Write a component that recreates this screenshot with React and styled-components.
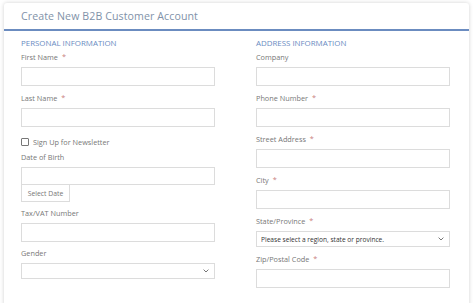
import React from "react";
import styled, { createGlobalStyle } from "styled-components";

const GlobalStyle = createGlobalStyle`
  html, body {
    margin: 0;
    padding: 0;
    background: #ffffff;
  }
  body {
    font-family: "Open Sans", "Liberation Sans", sans-serif;
  }
`;

const Chevron = () => (
  <svg width="6" height="4" viewBox="0 0 6 4">
    <path d="M0.6 0.6 L3 3 L5.4 0.6" fill="none" stroke="#666" strokeWidth="0.9" />
  </svg>
);

const Field = ({ label, required, select, placeholder, mb = 7 }) => (
  <FieldWrap $mb={mb}>
    <Label>
      {label}
      {required && <Star>*</Star>}
    </Label>
    {select ? (
      <SelectBox>
        <SelectText>{placeholder}</SelectText>
        <Chevron />
      </SelectBox>
    ) : (
      <Input />
    )}
  </FieldWrap>
);

export default function App() {
  return (
    <>
      <GlobalStyle />
      <Card>
        <Header>
          <Title>Create New B2B Customer Account</Title>
        </Header>
        <Body>
          <Column>
            <Heading>PERSONAL INFORMATION</Heading>
            <Field label="First Name" required />
            <Field label="Last Name" required mb={10} />
            <CheckRow>
              <Box />
              <CheckText>Sign Up for Newsletter</CheckText>
            </CheckRow>
            <FieldWrap $mb={6}>
              <Label>Date of Birth</Label>
              <Input $h={18} />
              <DateButton>Select Date</DateButton>
            </FieldWrap>
            <Field label="Tax/VAT Number" mb={6} />
            <Field label="Gender" select mb={0} />
          </Column>
          <Column>
            <Heading>ADDRESS INFORMATION</Heading>
            <Field label="Company" />
            <Field label="Phone Number" required />
            <Field label="Street Address" required />
            <Field label="City" required />
            <Field
              label="State/Province"
              required
              select
              placeholder="Please select a region, state or province."
            />
            <Field label="Zip/Postal Code" required mb={0} />
          </Column>
        </Body>
      </Card>
    </>
  );
}

const Card = styled.div`
  width: 465px;
  margin: 3px 0 0 4px;
  background: #fff;
  border-radius: 3px;
  box-shadow: 0 0 4px rgba(0, 0, 0, 0.18);
  padding-bottom: 20px;
`;

const Header = styled.div`
  height: 26px;
  border-bottom: 2px solid #6b8cc0;
  display: flex;
  align-items: center;
  padding-left: 17px;
`;

const Title = styled.h1`
  margin: 0;
  font-size: 10.6px;
  font-weight: 400;
  color: #8192a9;
  letter-spacing: 0.1px;
`;

const Body = styled.div`
  display: grid;
  grid-template-columns: 194px 194px;
  column-gap: 41px;
  padding: 7px 0 0 17px;
`;

const Column = styled.div`
  display: flex;
  flex-direction: column;
`;

const Heading = styled.h2`
  margin: 0 0 4px;
  font-size: 7.9px;
  line-height: 10px;
  font-weight: 400;
  color: #6a8cc2;
`;

const FieldWrap = styled.div`
  display: flex;
  flex-direction: column;
  margin-bottom: ${(p) => p.$mb}px;
`;

const Label = styled.label`
  font-size: 7.3px;
  line-height: 10px;
  color: #777;
  margin-bottom: 5px;
`;

const Star = styled.span`
  margin-left: 4px;
  color: #c98080;
`;

const Input = styled.div`
  height: ${(p) => p.$h || 19}px;
  box-sizing: border-box;
  border: 1px solid #dcdcdc;
  background: #fff;
`;

const SelectBox = styled.div`
  height: 16px;
  box-sizing: border-box;
  border: 1px solid #dcdcdc;
  display: flex;
  align-items: center;
  justify-content: space-between;
  padding: 0 5px 0 4px;
`;

const SelectText = styled.span`
  font-size: 6.6px;
  color: #333;
`;

const CheckRow = styled.div`
  display: flex;
  align-items: center;
  height: 10px;
  margin-bottom: 5px;
`;

const Box = styled.span`
  width: 6px;
  height: 6px;
  border: 1px solid #777;
  border-radius: 1px;
  margin-right: 4px;
`;

const CheckText = styled.span`
  font-size: 7.3px;
  color: #777;
`;

const DateButton = styled.div`
  width: 49px;
  height: 17px;
  box-sizing: border-box;
  border: 1px solid #dcdcdc;
  border-top: none;
  font-size: 6.8px;
  color: #777;
  display: flex;
  align-items: center;
  justify-content: center;
`;
